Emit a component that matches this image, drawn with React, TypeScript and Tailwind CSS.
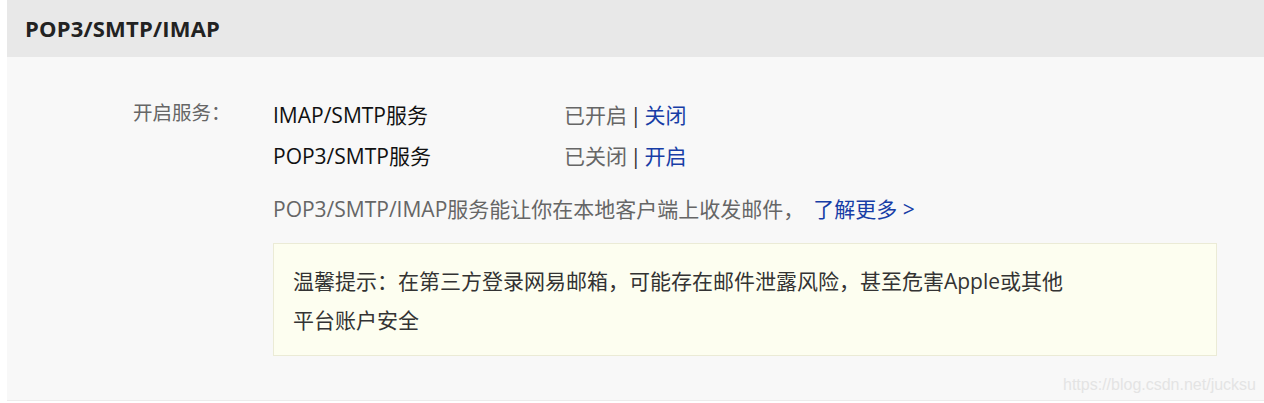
import React from 'react';

const services = [
  { name: 'IMAP/SMTP服务', status: '已开启', action: '关闭' },
  { name: 'POP3/SMTP服务', status: '已关闭', action: '开启' },
];

const App = () => {
  return (
    <div className="relative w-[1264px] h-[403px] bg-white pl-[7px] font-['Open_Sans','Noto_Sans_CJK_SC',sans-serif]">
      {/* 标题栏 */}
      <div className="h-[57px] bg-[#e8e8e8] pl-[18px] flex items-center">
        <h2 className="text-[22px] font-bold text-[#222] tracking-[0.2px]">POP3/SMTP/IMAP</h2>
      </div>

      {/* 内容区 */}
      <div className="h-[344px] bg-[#f8f8f8] border-b border-[#ececec] pt-[38px] pl-[126px] flex">
        <div className="w-[140px] text-[19.5px] leading-[41px] text-[#666] -mt-[3px]">开启服务：</div>
        <div className="w-[944px]">
          {services.map(s => (
            <div key={s.name} className="flex text-[21px] leading-[41px]">
              <span className="w-[291px] text-[#111]">{s.name}</span>
              <span className="text-[#666]">{s.status}</span>
              <span className="text-[#333] mx-[3px]">|</span>
              <a className="text-[#173da6] cursor-pointer">{s.action}</a>
            </div>
          ))}

          <p className="mt-[12px] text-[21px] leading-[41px] text-[#666]">
            POP3/SMTP/IMAP服务能让你在本地客户端上收发邮件，
            <a className="ml-[9px] text-[#173da6] cursor-pointer">了解更多 &gt;</a>
          </p>

          {/* 温馨提示 */}
          <div className="mt-[13px] h-[113px] bg-[#fdfef0] border border-[#ebebd6] pl-[19px] pt-[18px] text-[21px] leading-[39px] text-[#333]">
            温馨提示：在第三方登录网易邮箱，可能存在邮件泄露风险，甚至危害Apple或其他
            <br />
            平台账户安全
          </div>
        </div>
      </div>

      <span className="absolute right-[8px] bottom-[6px] text-[16px] text-[#e4e4e4] font-['Liberation_Sans',Arial,sans-serif]">
        https://blog.csdn.net/jucksu
      </span>
    </div>
  );
};

export default App;
